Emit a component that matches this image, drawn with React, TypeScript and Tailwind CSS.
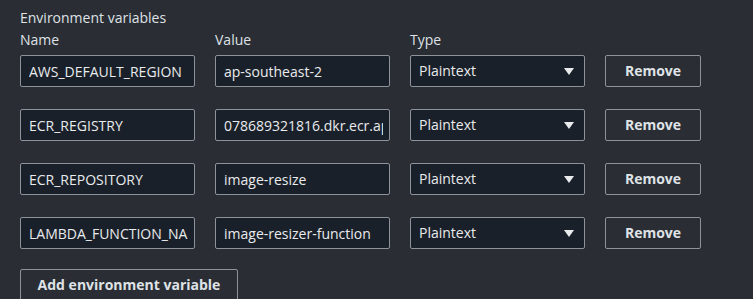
import React from 'react';

type EnvVar = { name: string; value: string; type: string };

const vars: EnvVar[] = [
  { name: 'AWS_DEFAULT_REGION', value: 'ap-southeast-2', type: 'Plaintext' },
  { name: 'ECR_REGISTRY', value: '078689321816.dkr.ecr.ap-southeast-2.amazonaws.com', type: 'Plaintext' },
  { name: 'ECR_REPOSITORY', value: 'image-resize', type: 'Plaintext' },
  { name: 'LAMBDA_FUNCTION_NAME', value: 'image-resizer-function', type: 'Plaintext' },
];

const inputCls =
  'h-[32px] w-full rounded-[2px] border border-[#8d9399] bg-[#1a2029] pl-[8px] pr-[6px] text-[14px] text-[#e9ebed] outline-none';

const App: React.FC = () => {
  return (
    <main
      className="h-[299px] w-[753px] overflow-hidden bg-[#2a2d33] px-[20px] pt-[8px] text-[14px] leading-[20px] text-[#dfe2e6]"
      style={{ fontFamily: '"Open Sans", "Noto Sans", sans-serif' }}
    >
      <div>Environment variables</div>
      <div className="mt-[2px] grid grid-cols-[175px_175px_175px_96px] gap-x-[20px]">
        <div>Name</div>
        <div>Value</div>
        <div>Type</div>
        <div />
      </div>
      <div className="mt-[5px] flex flex-col gap-[22px]">
        {vars.map((v) => (
          <div key={v.name} className="grid grid-cols-[175px_175px_175px_96px] gap-x-[20px]">
            <input readOnly value={v.name} className={inputCls} />
            <input readOnly value={v.value} className={inputCls} />
            <div className="flex h-[32px] items-center justify-between rounded-[2px] border border-[#8d9399] bg-[#1a2029] pl-[8px] pr-[10px] text-[#e9ebed]">
              <span>{v.type}</span>
              <svg width="10" height="7" viewBox="0 0 10 7">
                <path d="M0 0 L10 0 L5 7 Z" fill="#e9ebed" />
              </svg>
            </div>
            <button className="h-[32px] rounded-[2px] border border-[#8d9399] bg-transparent font-bold text-[#dfe2e6]">
              Remove
            </button>
          </div>
        ))}
      </div>
      <button className="mt-[20px] h-[32px] w-[218px] rounded-[2px] border border-[#8d9399] bg-transparent font-bold text-[#dfe2e6]">
        Add environment variable
      </button>
    </main>
  );
};

export default App;
